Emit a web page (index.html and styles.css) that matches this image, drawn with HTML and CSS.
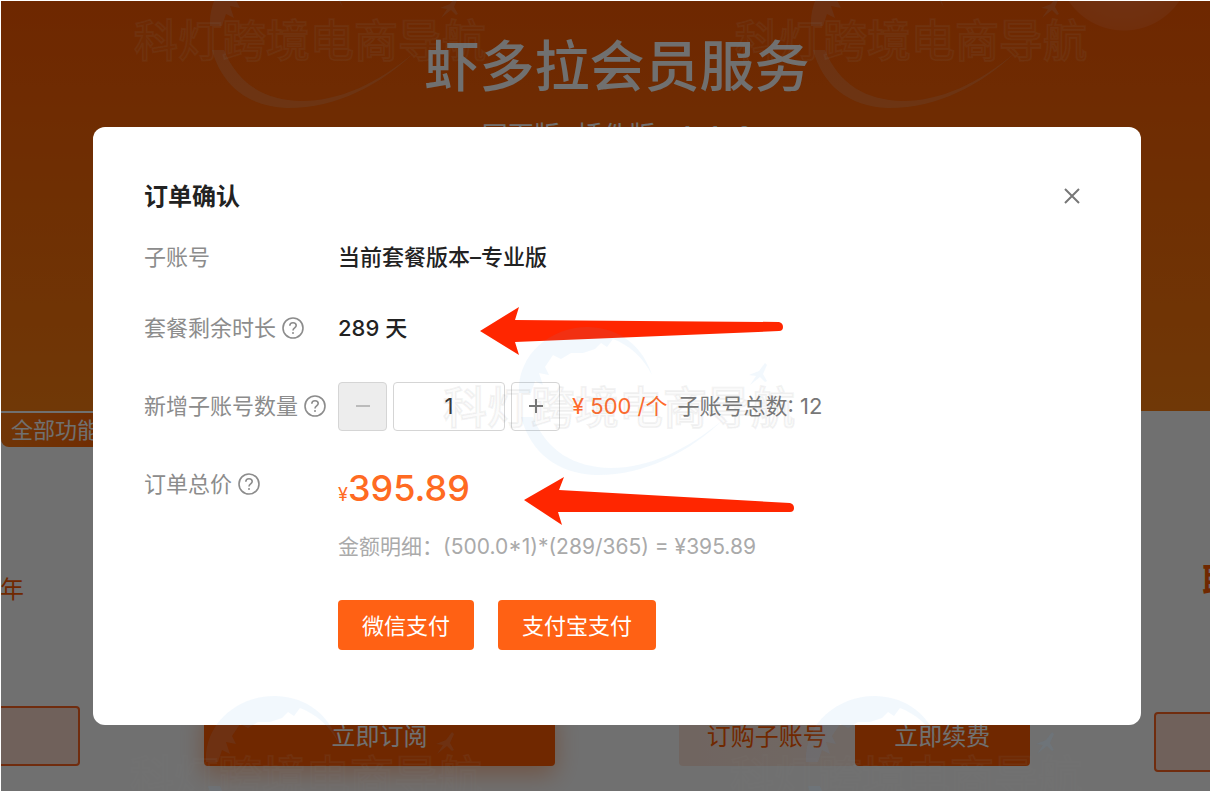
FILE: index.html
```
<!DOCTYPE html>
<html lang="zh-CN">
<head>
  <meta charset="UTF-8" />
  <meta name="viewport" content="width=device-width, initial-scale=1.0" />
  <title>虾多拉会员服务</title>
  <link rel="stylesheet" href="styles.css">
</head>
<body>
  <div class="page">
    <header class="hero">
      <h1 class="hero__title">虾多拉会员服务</h1>
      <p class="hero__subtitle">网页版+插件版，1+1&gt;2</p>
    </header>

    <section class="plans">
      <article class="plan">
        <span class="plan__tag">全部功能</span>
        <p class="plan__price plan__price--right">年</p>
        <div class="plan__footer">
          <button type="button" class="btn btn--outline" aria-label="订阅"></button>
        </div>
      </article>
      <article class="plan">
        <div class="plan__footer">
          <button type="button" class="btn btn--primary btn--shadow">立即订阅</button>
        </div>
      </article>
      <article class="plan">
        <div class="plan__footer">
          <button type="button" class="btn btn--light">订购子账号</button>
          <button type="button" class="btn btn--primary">立即续费</button>
        </div>
      </article>
      <article class="plan plan--contact">
        <p class="plan__price plan__price--big">联</p>
        <div class="plan__footer">
          <button type="button" class="btn btn--outline" aria-label="联系"></button>
        </div>
      </article>
    </section>
  </div>

  <div class="overlay">
    <div class="modal" role="dialog" aria-modal="true" aria-labelledby="modal_title">
      <div class="modal__header">
        <h2 class="modal__title" id="modal_title">订单确认</h2>
        <button type="button" class="modal__close" aria-label="关闭">
          <svg width="18" height="18" viewBox="0 0 18 18"><path d="M2 2L16 16M16 2L2 16" /></svg>
        </button>
      </div>

      <form class="order">
        <div class="order__row order__row--first">
          <span class="order__label">子账号</span>
          <strong class="order__value">当前套餐版本–专业版</strong>
        </div>
        <div class="order__row">
          <span class="order__label">套餐剩余时长
            <svg class="help" viewBox="0 0 22 22"><circle cx="11" cy="11" r="10" /><path d="M7.8 8.8C7.8 6.8 9.2 5.8 11 5.8s3.2 1.1 3.2 2.8c0 2.2-3.2 2.4-3.2 4.8" /><circle class="help__dot" cx="11" cy="16" r="1" /></svg>
          </span>
          <strong class="order__value">289 天</strong>
        </div>
        <div class="order__row">
          <label class="order__label" for="quantity">新增子账号数量
            <svg class="help" viewBox="0 0 22 22"><circle cx="11" cy="11" r="10" /><path d="M7.8 8.8C7.8 6.8 9.2 5.8 11 5.8s3.2 1.1 3.2 2.8c0 2.2-3.2 2.4-3.2 4.8" /><circle class="help__dot" cx="11" cy="16" r="1" /></svg>
          </label>
          <div class="stepper">
            <button type="button" class="stepper__btn" aria-label="减少" disabled>
              <svg width="16" height="16" viewBox="0 0 16 16"><path d="M1 8H15" /></svg>
            </button>
            <input class="stepper__input" type="text" id="quantity" name="quantity" value="1" />
            <button type="button" class="stepper__btn" aria-label="增加">
              <svg width="16" height="16" viewBox="0 0 16 16"><path d="M1 8H15M8 1V15" /></svg>
            </button>
          </div>
          <span class="order__unit">¥ 500 /个</span>
          <span class="order__count">子账号总数: 12</span>
        </div>
        <div class="order__row">
          <span class="order__label">订单总价
            <svg class="help" viewBox="0 0 22 22"><circle cx="11" cy="11" r="10" /><path d="M7.8 8.8C7.8 6.8 9.2 5.8 11 5.8s3.2 1.1 3.2 2.8c0 2.2-3.2 2.4-3.2 4.8" /><circle class="help__dot" cx="11" cy="16" r="1" /></svg>
          </span>
          <span class="order__total"><small>¥</small>395.89</span>
        </div>
        <p class="order__detail">金额明细：(500.0*1)*(289/365) = ¥395.89</p>
        <div class="order__actions">
          <button type="submit" class="pay">微信支付</button>
          <button type="submit" class="pay">支付宝支付</button>
        </div>
      </form>

      <svg class="arrows" width="1048" height="598" viewBox="93 127 1048 598">
        <path d="M480 331L519 307 515 320 779 322Q783 323 783 327T779 331L515 342 519 355Z" />
        <path d="M524 500L564 477 559 490 790 503Q794 504 794 508T790 512L558 512 562 525Z" />
      </svg>
    </div>
  </div>

  <svg class="symbols" width="0" height="0">
    <symbol id="watermark" viewBox="0 0 360 170">
      <path class="mark__globe" d="M76 76C74 36 110 9 146 10C178 11 200 30 209 58C200 40 186 28 170 22L164 30 158 26 152 32 140 36 128 36 118 42 110 38 102 50 106 58 96 56 100 68 92 64 88 76Z" />
      <path class="mark__globe" d="M78 100C88 136 114 156 152 158C200 159 246 136 282 101C244 134 204 151 168 151C130 150 104 134 90 100Z" />
      <path class="mark__globe" d="M306 58l10-4 6-8 2 2-4 9 4 7-2 1-5-5-10 8 6-9Z" />
      <text class="mark__text" x="0" y="107">科灯跨境电商导航</text>
    </symbol>
  </svg>
  <div class="marks" aria-hidden="true">
    <svg class="mark mark--1"><use href="#watermark" /></svg>
    <svg class="mark mark--2"><use href="#watermark" /></svg>
    <svg class="mark mark--3"><use href="#watermark" /></svg>
    <svg class="mark mark--4"><use href="#watermark" /></svg>
    <svg class="mark mark--5"><use href="#watermark" /></svg>
  </div>
</body>
</html>
```
FILE: styles.css
```
* {
  box-sizing: border-box;
}

body {
  margin: 0;
  min-height: 100vh;
  position: relative;
  overflow: hidden;
  font-family: Inter, 'Noto Sans CJK SC', sans-serif;
  font-size: 22px;
  background-color: #fff;
  color: #222;
}

h1, h2, p {
  margin: 0;
}

button, input {
  font-family: inherit;
  font-size: inherit;
}

/* page under the mask */
.page {
  overflow: hidden;
}

.hero {
  height: 411px;
  padding: 32px 0 0 24px;
  text-align: center;
  color: #fff;
  background: radial-gradient(circle at 1124px -36px, #ff7a3c 0, #ff6a1c 66px, transparent 67px), linear-gradient(#fb5a02, #ff8010);
}

.hero__title {
  font-size: 55px;
  font-weight: 500;
  line-height: 68px;
}

.hero__subtitle {
  margin-top: 16px;
  font-size: 26px;
  line-height: 40px;
}

.plans {
  display: flex;
  justify-content: center;
  padding-left: 24px;
}

.plan {
  flex: 0 0 475px;
  height: 380px;
  display: flex;
  flex-direction: column;
  padding-bottom: 25px;
}

.plan--contact {
  padding-bottom: 19px;
}

.plan__tag {
  align-self: flex-end;
  width: 141px;
  margin-top: 2px;
  padding-left: 10px;
  line-height: 34px;
  color: #fff;
  background: linear-gradient(90deg, #ff7a10, #ff5c00);
  border-bottom-left-radius: 8px;
}

.plan__price {
  padding: 0 110px;
  color: #ff5c00;
}

.plan__price--right {
  margin-top: 127px;
  padding-right: 118px;
  text-align: right;
  font-size: 24px;
  line-height: 32px;
}

.plan__price--big {
  margin-top: 145px;
  font-size: 36px;
  font-weight: 700;
  line-height: 52px;
}

.plan__footer {
  display: flex;
  margin: auto 62px 0;
}

.btn {
  flex: 1;
  height: 60px;
  padding: 0 0 4px;
  border: none;
  border-radius: 4px;
  font-size: 24px;
}

.btn--primary {
  background-color: #ff5c00;
  color: #fff;
}

.btn--shadow {
  box-shadow: 0 8px 24px rgba(255, 92, 0, 0.4);
}

.btn--light {
  background: linear-gradient(90deg, #ffe6da, #ffede4);
  color: #ff5c00;
}

.btn--outline {
  background-color: #ffded0;
  border: 2px solid #ff6420;
}

/* order dialog */
.overlay {
  position: absolute;
  inset: 0;
  padding: 126px 69px 0 92px;
  background-color: rgba(0, 0, 0, 0.56);
  background-clip: padding-box;
  border-top: 1px solid #fff;
  border-left: 1px solid #fff;
}

.modal {
  position: relative;
  padding: 47px 52px 75px 51px;
  background-color: #fff;
  border-radius: 12px;
}

.modal__header {
  display: flex;
  align-items: center;
  justify-content: space-between;
  height: 44px;
}

.modal__title {
  padding-bottom: 4px;
  font-size: 24px;
  font-weight: 700;
}

.modal__close {
  display: flex;
  padding: 8px;
  border: none;
  background: none;
  cursor: pointer;
}

.modal__close path {
  stroke: #777;
  stroke-width: 2;
}

.order__row {
  display: flex;
  align-items: center;
  height: 50px;
  margin-top: 28px;
}

.order__row--first {
  margin: 14px 0 -7px;
}

.order__label,
.order__value,
.order__unit,
.order__count {
  padding-bottom: 4px;
}

.order__label {
  display: flex;
  align-items: center;
  gap: 6px;
  width: 194px;
  color: #8c8c8c;
}

.order__value {
  font-weight: 500;
}

.help {
  width: 22px;
  height: 22px;
  margin-top: 4px;
  fill: none;
  stroke: #8c8c8c;
  stroke-width: 1.6;
}

.help .help__dot {
  fill: #8c8c8c;
  stroke: none;
}

.stepper {
  display: flex;
  gap: 6px;
}

.stepper__btn {
  display: flex;
  align-items: center;
  justify-content: center;
  width: 49px;
  height: 49px;
  padding: 0;
  border: 1px solid #d5d5d5;
  border-radius: 4px;
  background-color: #fff;
}

.stepper__btn path {
  stroke: #777;
  stroke-width: 2;
}

.stepper__btn:disabled {
  background-color: #ededed;
}

.stepper__btn:disabled path {
  stroke: #bbb;
}

.stepper__input {
  width: 112px;
  height: 49px;
  border: 1px solid #d5d5d5;
  border-radius: 4px;
  text-align: center;
  color: #333;
}

.order__unit {
  margin: 0 10px 0 12px;
  color: #ff6a2b;
}

.order__count {
  color: #777;
}

.order__total {
  padding-top: 8px;
  font-size: 36px;
  font-weight: 500;
  color: #ff6a22;
}

.order__total small {
  font-size: 18px;
  font-weight: 400;
}

.order__detail {
  margin: 22px 0 0 194px;
  font-size: 21px;
  line-height: 32px;
  color: #aaa;
}

.order__actions {
  display: flex;
  gap: 24px;
  margin: 37px 0 0 194px;
}

.pay {
  height: 50px;
  padding: 0 24px 2px;
  border: none;
  border-radius: 4px;
  background-color: #ff6114;
  color: #fff;
  cursor: pointer;
}

.arrows {
  position: absolute;
  top: 0;
  left: 0;
  fill: #ff2600;
  pointer-events: none;
}

/* watermark */
.symbols {
  position: absolute;
}

.marks {
  position: absolute;
  inset: 0;
  overflow: hidden;
  pointer-events: none;
}

.mark {
  position: absolute;
  width: 360px;
  height: 170px;
}

.mark__globe {
  fill: rgba(90, 160, 225, 0.08);
}

.mark__text {
  font-size: 44px;
  font-weight: 500;
  fill: rgba(128, 128, 128, 0.05);
  stroke: rgba(128, 128, 128, 0.09);
  stroke-width: 2;
}

.mark--1 {
  top: -50px;
  left: 134px;
}

.mark--2 {
  top: -50px;
  left: 735px;
}

.mark--3 {
  top: 317px;
  left: 443px;
}

.mark--4 {
  top: 686px;
  left: 130px;
}

.mark--5 {
  top: 686px;
  left: 730px;
}
```
